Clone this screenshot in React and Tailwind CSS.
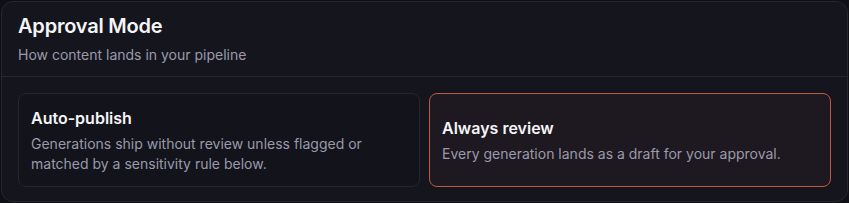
import React from "react";

export default function App() {
  return (
    <div className="bg-[#0f0f15] w-[849px] h-[203px] p-px" style={{ fontFamily: "Inter, 'Noto Sans', sans-serif" }}>
      <div className="h-[201px] rounded-xl border border-[#262633] bg-[#15151e] flex flex-col">
        <div className="px-4 pt-[10px] pb-[11px] border-b border-[#262633]">
          <h2 className="text-[20px] leading-[28px] font-semibold text-[#f5f5f7] tracking-[-0.01em]">Approval Mode</h2>
          <p className="text-[14px] leading-[20px] text-[#9a9aab] mt-[5px]">How content lands in your pipeline</p>
        </div>
        <div className="grid grid-cols-2 gap-[9px] px-4 pt-4 pb-[14px] flex-1">
          <div className="rounded-lg border border-[#262633] bg-[#13131b] p-3 flex flex-col justify-center">
            <div className="text-[16px] leading-[24px] font-semibold text-[#f5f5f7]">Auto-publish</div>
            <div className="text-[14px] leading-[20px] text-[#9a9aab] mt-1">Generations ship without review unless flagged or matched by a sensitivity rule below.</div>
          </div>
          <div className="rounded-lg border border-[#c2583c] bg-[#1e1820] p-3 flex flex-col justify-center">
            <div className="text-[16px] leading-[24px] font-semibold text-[#f5f5f7]">Always review</div>
            <div className="text-[14px] leading-[20px] text-[#9a9aab] mt-1">Every generation lands as a draft for your approval.</div>
          </div>
        </div>
      </div>
    </div>
  );
}
